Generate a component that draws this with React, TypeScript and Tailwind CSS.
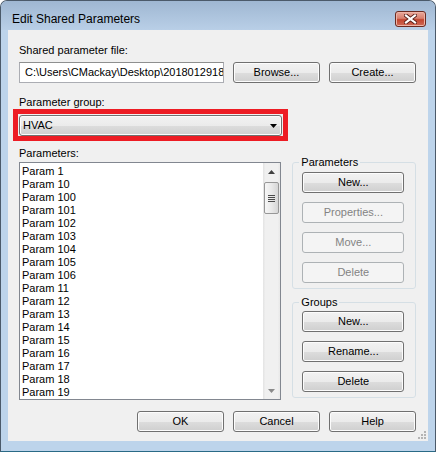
import React from 'react';

const FONT = { fontFamily: '"Liberation Sans", Arial, sans-serif' };

const PARAMS = [
  'Param 1', 'Param 10', 'Param 100', 'Param 101', 'Param 102', 'Param 103',
  'Param 104', 'Param 105', 'Param 106', 'Param 11', 'Param 12', 'Param 13',
  'Param 14', 'Param 15', 'Param 16', 'Param 17', 'Param 18', 'Param 19',
];

// Win7 push button look
const BTN =
  'h-[21px] rounded-[3px] border border-[#707070] bg-[linear-gradient(to_bottom,#f2f2f2_0%,#ebebeb_50%,#dddddd_51%,#cfcfcf_100%)] shadow-[inset_0_0_0_1px_#fcfcfc] flex items-center justify-center text-[11px] text-black';
const BTN_DISABLED =
  'h-[21px] rounded-[3px] border border-[#adb2b5] bg-[#f4f4f4] flex items-center justify-center text-[11px] text-[#838383]';

const Button = ({ label, disabled, focused, className = '' }: { label: string; disabled?: boolean; focused?: boolean; className?: string }) => {
  if (disabled) return <div className={`${BTN_DISABLED} ${className}`}>{label}</div>;
  if (focused)
    return (
      <div className={`${BTN} border-[#3c7fb1] shadow-[inset_0_0_0_1px_#bfe4f7] ${className}`}>{label}</div>
    );
  return <div className={`${BTN} ${className}`}>{label}</div>;
};

const GroupBox = ({ title, children, className = '' }: { title: string; children: React.ReactNode; className?: string }) => (
  <fieldset className={`border border-[#d5dfe5] rounded-[3px] ${className}`}>
    <legend className="ml-[6px] px-[2px] text-[11px] leading-[13px] text-black">{title}</legend>
    <div className="flex flex-col gap-[9px] pl-[9px] pb-[5px]">{children}</div>
  </fieldset>
);

const CloseButton = () => (
  <div className="w-[31px] h-[16px] rounded-[3px] border border-[#6b2a20] bg-[linear-gradient(to_bottom,#e9a99b_0%,#d8806f_45%,#c2452f_55%,#cf6b58_100%)] shadow-[inset_0_0_0_1px_#eeb3a6] flex items-center justify-center">
    <svg width="13" height="10" viewBox="0 0 13 10">
      <path d="M2 1.5 L11 8.5 M11 1.5 L2 8.5" stroke="#5b1f18" strokeWidth="4" strokeLinecap="square" />
      <path d="M2 1.5 L11 8.5 M11 1.5 L2 8.5" stroke="#ffffff" strokeWidth="2.2" strokeLinecap="square" />
    </svg>
  </div>
);

const Scrollbar = () => (
  <div className="w-[17px] flex flex-col bg-[linear-gradient(to_right,#e3e3e3_0%,#f0f0f0_15%,#f0f0f0_85%,#e8e8e8_100%)]">
    <div className="h-[17px] flex items-center justify-center">
      <svg width="7" height="4" viewBox="0 0 7 4"><path d="M0 4 L3.5 0 L7 4 Z" fill="#404040" /></svg>
    </div>
    <div className="mt-[2px] mx-px h-[32px] rounded-[2px] border border-[#979797] bg-[linear-gradient(to_right,#f6f6f6_0%,#e9e9e9_50%,#d6d6d6_100%)] flex flex-col items-center justify-center gap-[1px]">
      <div className="w-[7px] h-px bg-[#4a4a4a]" />
      <div className="w-[7px] h-px bg-[#4a4a4a]" />
      <div className="w-[7px] h-px bg-[#4a4a4a]" />
      <div className="w-[7px] h-px bg-[#4a4a4a]" />
    </div>
    <div className="flex-1" />
    <div className="h-[17px] flex items-center justify-center">
      <svg width="7" height="4" viewBox="0 0 7 4"><path d="M0 0 L7 0 L3.5 4 Z" fill="#8a8a8a" /></svg>
    </div>
  </div>
);

export default function App() {
  return (
    <div
      className="w-[436px] h-[452px] flex flex-col rounded-t-[7px] border border-[#4b5a6a] border-b-[#2a6a86] bg-[#bdd4eb] overflow-hidden"
      style={FONT}
    >
      {/* title bar */}
      <div className="h-[29px] flex items-start justify-between pl-[11px] pr-[9px] pt-[10px] bg-[linear-gradient(to_bottom,#9fb7d2,#b9cfe7)]">
        <span className="text-[12px] leading-[16px] text-black">Edit Shared Parameters</span>
        <CloseButton />
      </div>

      {/* client */}
      <div className="relative mx-[7px] h-[411px] bg-[#f0f0f0] pl-[11px] pr-[12px] pt-[14px] text-[11px] text-black flex flex-col">
        <div className="leading-[13px]">Shared parameter file:</div>
        <div className="mt-[5px] flex gap-[9px]">
          <div className="w-[205px] h-[21px] border border-[#abadb3] border-t-[#8e8f8f] bg-white pl-[5px] flex items-center overflow-hidden whitespace-nowrap">
            C:\Users\CMackay\Desktop\2018012918:
          </div>
          <Button label="Browse..." className="w-[87px]" />
          <Button label="Create..." className="w-[87px]" />
        </div>

        <div className="mt-[13px] leading-[13px]">Parameter group:</div>
        <div className="ml-[-6px] w-[275px] border-[5px] border-[#ed1c24] pt-px px-px">
          <div className="h-[21px] rounded-[3px] border border-[#707070] bg-[linear-gradient(to_bottom,#f2f2f2_0%,#ebebeb_50%,#dddddd_51%,#cfcfcf_100%)] shadow-[inset_0_0_0_1px_#fcfcfc] flex items-center justify-between pl-[3px] pr-[4px]">
            <span>HVAC</span>
            <svg width="7" height="4" viewBox="0 0 7 4"><path d="M0 0 L7 0 L3.5 4 Z" fill="#000" /></svg>
          </div>
        </div>

        <div className="mt-[6px] flex">
          <div className="w-[263px] flex flex-col">
            <div className="leading-[13px]">Parameters:</div>
            <div className="mt-[2px] h-[238px] border border-[#828790] bg-white flex">
              <div className="flex-1 pt-[2px] pl-[2px] overflow-hidden">
                {PARAMS.map((p) => (
                  <div key={p} className="leading-[13px] h-[13px]">{p}</div>
                ))}
              </div>
              <Scrollbar />
            </div>
          </div>

          <div className="ml-[11px] w-[124px] pt-[9px] flex flex-col">
            <GroupBox title="Parameters">
              <Button label="New..." className="w-[102px] mt-[3px] border-[#555555] shadow-[inset_0_0_0_1px_#e6e6e6]" />
              <Button label="Properties..." disabled className="w-[102px]" />
              <Button label="Move..." disabled className="w-[102px]" />
              <Button label="Delete" disabled className="w-[102px]" />
            </GroupBox>
            <GroupBox title="Groups" className="mt-[7px]">
              <Button label="New..." className="w-[102px] mt-[2px]" />
              <Button label="Rename..." className="w-[102px]" />
              <Button label="Delete" className="w-[102px]" />
            </GroupBox>
          </div>
        </div>

        <div className="mt-[11px] flex justify-end gap-[9px]">
          <Button label="OK" focused className="w-[87px]" />
          <Button label="Cancel" className="w-[87px]" />
          <Button label="Help" className="w-[87px]" />
        </div>

        {/* size grip */}
        <svg className="absolute right-[2px] bottom-[2px]" width="10" height="10" viewBox="0 0 10 10">
          {[[8, 2], [5, 5], [8, 5], [2, 8], [5, 8], [8, 8]].map(([x, y]) => (
            <rect key={`${x}-${y}`} x={x} y={y} width="2" height="2" fill="#b4b4b4" />
          ))}
        </svg>
      </div>
    </div>
  );
}
